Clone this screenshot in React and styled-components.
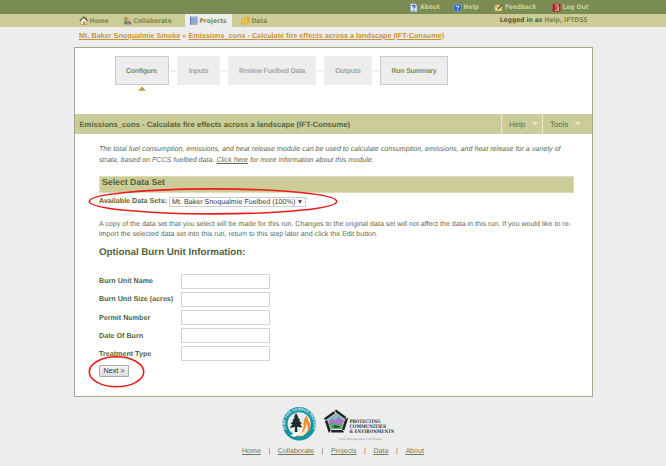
import React from 'react';
import styled, { createGlobalStyle } from 'styled-components';

const GlobalStyle = createGlobalStyle`
  * { box-sizing: border-box; }
  body {
    margin: 0;
    background: #ededed;
    color: #606d55;
    font: 7.09px/10.4px "Liberation Sans", Arial, sans-serif;
    text-rendering: geometricPrecision;
    white-space: nowrap;
  }
`;

const Page = styled.div`
  position: relative;
  width: 666px;
  height: 466px;
  overflow: hidden;
`;

const navFont = 'bold 6.52px/8px "DejaVu Sans Condensed", "DejaVu Sans", sans-serif';

const TopBar = styled.header`
  display: flex;
  height: 14px;
  padding: 0 0 0 409px;
  background: #7a8c54;
  color: #cccc99;
`;

const NavBar = styled.nav`
  display: flex;
  height: 13px;
  padding-left: 74px;
  background: #cccc99;
  color: #788a50;
`;

const NavItem = styled.a`
  display: flex;
  align-items: center;
  flex: none;
  width: ${(p) => p.$width}px;
  padding-left: ${(p) => p.$pad || 0}px;
  gap: 2px;
  background: ${(p) => (p.$active ? '#ededed' : 'transparent')};
  margin-right: ${(p) => p.$after || 0}px;
  font: ${navFont};
`;

const UserInfo = styled.div`
  margin-left: auto;
  padding: 2px 78.5px 0 0;
  font: ${navFont};
  font-size: 6.6px;
  b { color: #53643a; }
`;

const Icon = styled.svg`
  width: 9px;
  height: 9px;
  flex: none;
`;

const Breadcrumb = styled.div`
  height: 20px;
  padding: 4px 0 0 79px;
  font-size: 7.24px;
  font-weight: bold;
  color: #ca9139;
`;

const CrumbLink = styled.a`
  text-decoration: underline;
`;

const Panel = styled.main`
  width: 519.5px;
  height: 350px;
  margin-left: 73.5px;
  border: 1px solid #a5ab88;
  background: #fff;
`;

const Steps = styled.div`
  display: flex;
  height: 66px;
  padding: 8px 0 0 40px;
`;

const Step = styled.div`
  position: relative;
  width: ${(p) => p.$width}px;
  height: 29px;
  border: 1px solid ${(p) => (p.$enabled ? '#c9cbcb' : '#efefef')};
  border-bottom-width: ${(p) => (p.$enabled ? '1.5px' : '1px')};
  background: #ededed;
  color: ${(p) => (p.$enabled ? '#7f8d5b' : '#a3a8a5')};
  font-size: 7px;
  letter-spacing: -0.22px;
  font-weight: bold;
  line-height: 29px;
  text-align: center;
`;

const Connector = styled.i`
  width: ${(p) => p.$width}px;
  height: 2px;
  margin-top: 14px;
  background: #eee;
  border: solid #fff;
  border-width: 0 1.5px;
`;

const StepArrow = styled.svg`
  position: absolute;
  top: 29px;
  left: 22.5px;
  width: 8px;
  height: 5px;
  fill: #cb932b;
`;

const TitleBar = styled.div`
  display: flex;
  height: 20px;
  background: #cccc99;
`;

const Title = styled.h1`
  flex: 1;
  margin: 0;
  padding-left: 5px;
  font-size: 7.66px;
  line-height: 22px;
  color: #53643a;
`;

const MenuButton = styled.div`
  display: flex;
  align-items: center;
  width: ${(p) => p.$width}px;
  padding: 2px 0 0 7.5px;
  gap: 6.5px;
  border-left: 1px solid #e8e8d0;
  color: #5f6e43;
  font-size: 7.9px;
`;

const Caret = styled.svg`
  width: 6px;
  height: 4px;
  fill: #e8e8cd;
  margin-top: -2px;
`;

const Content = styled.div`
  width: 500px;
  padding: 10px 0 0 24.5px;
`;

const Intro = styled.p`
  height: 32px;
  margin: 0;
  font-size: 7.11px;
  line-height: 10.6px;
  font-style: italic;
`;

const SectionTitle = styled.h2`
  width: 475px;
  height: 17px;
  margin: 0 0 1.5px;
  padding-left: 2px;
  border: 1px solid #deddbb;
  background: #cccc99;
  color: #53643a;
  font-size: 8.72px;
  line-height: 11px;
`;

const SelectRow = styled.div`
  display: flex;
  align-items: center;
  height: 14px;
`;

const Label = styled.label`
  width: ${(p) => p.$width}px;
  color: #53643a;
  font-size: 7.15px;
  font-weight: bold;
`;

const Select = styled.div`
  display: flex;
  align-items: center;
  justify-content: space-between;
  width: 136.5px;
  height: 10px;
  padding: 0 3px 0 2px;
  border: 1px solid #ccc;
  color: #3c3c3c;
  font-size: 7.16px;
  line-height: 8px;
`;

const SelectCaret = styled.svg`
  width: 4px;
  height: 4px;
  fill: #222;
`;

const Note = styled.p`
  margin: 10.5px 0 0;
  height: 28px;
`;

const FormTitle = styled.h2`
  height: 25.5px;
  margin: 0;
  color: #53643a;
  font-size: 9.77px;
  line-height: 12px;
`;

const FieldRow = styled.div`
  display: flex;
  align-items: center;
  height: 18.1px;
`;

const Input = styled.input`
  width: 88.5px;
  height: 15px;
  padding: 0 2px;
  border: 1px solid #d4d4d4;
  background: #fff;
  font-size: 7px;
`;

const Button = styled.button`
  display: block;
  width: 30px;
  height: 12px;
  margin-top: 2px;
  padding: 0;
  border: 1px solid #aaa;
  border-radius: 1px;
  background: linear-gradient(#f6f6f6, #dcdcdc);
  color: #333;
  font: 7.2px/9px "Liberation Sans", Arial, sans-serif;
`;

const Footer = styled.footer`
  padding-left: 242px;
`;

const Logos = styled.svg`
  display: block;
  width: 160px;
  height: 41px;
  margin: 8px 0 1px 38px;
`;

const FooterLinks = styled.div`
  display: flex;
  font-size: 7.07px;
  color: #7a7a4a;
  a { color: #6d7a52; text-decoration: underline; }
`;

const Pipe = styled.span`
  width: 17px;
  text-align: center;
`;

const Marks = styled.svg`
  position: absolute;
  inset: 0;
  pointer-events: none;
`;

const icons = {
  help: (
    <>
      <circle cx="4.5" cy="4.8" r="3.9" fill="#2e62c4" stroke="#9ab5df" strokeWidth=".6" />
      <path d="M3 3.7Q4.7 2 5.8 3.5Q5.6 4.8 4.5 5.2M4.5 6.3v1" stroke="#fff" strokeWidth="1" fill="none" />
    </>
  ),
  about: (
    <>
      <path d="M1.5.8H6.5L8 2.5V8.6H1.5z" fill="#d9e7fa" stroke="#85a4d3" strokeWidth=".5" />
      <path d="M3 3.2Q4.9 1.6 6 3.1Q5.9 4.2 4.6 5.1M4.6 6.4v1.2" stroke="#2856ad" strokeWidth="1.3" fill="none" />
    </>
  ),
  feedback: (
    <>
      <path d="M.8 2h7v6h-7z" fill="#ecd899" stroke="#c59a3b" strokeWidth=".6" />
      <path d="M1 2.5L4.3 5.3 7.6 2.5" stroke="#8b7230" strokeWidth=".7" fill="none" />
      <path d="M4 6L8 1.6" stroke="#54462d" strokeWidth="1.2" />
    </>
  ),
  logout: (
    <>
      <rect x=".7" y=".8" width="7.8" height="7.8" fill="#b91f25" />
      <path d="M3 1.6h3.8v6.2H3z" fill="#f3dedb" />
      <path d="M3.2 1.7l2.4 1.2v4.8L3.2 6.8z" fill="#c4373a" />
      <circle cx="6.2" cy="3" r=".8" fill="#444" />
    </>
  ),
  home: (
    <>
      <path d="M1.8 4.3V8.5h6V4.3L4.8 1.5z" fill="#f6f1df" stroke="#85816c" strokeWidth=".5" />
      <path d="M.8 4.9L4.8 1 8.5 4.9" stroke="#5c5540" strokeWidth="1.2" fill="none" />
      <path d="M4.2 5.6h2v3h-2z" fill="#c57925" />
      <path d="M6.6 1.2h1v2h-1z" fill="#876342" />
    </>
  ),
  people: (
    <>
      <circle cx="2.9" cy="2.9" r="1.8" fill="#b68458" />
      <path d="M.6 8.3Q.7 4.4 3 4.4T5.7 8.3z" fill="#659667" />
      <circle cx="6.2" cy="3.3" r="1.6" fill="#d4b09a" />
      <path d="M3.8 8.6Q4.1 5 6.4 5T8.8 8.6z" fill="#858cae" />
      <path d="M5.5 5.2l1.8 2.6" stroke="#c84c4c" strokeWidth=".8" />
    </>
  ),
  book: (
    <>
      <rect x="1" y=".5" width="7.7" height="8.3" fill="#90a9d2" />
      <path d="M1.6.5v8.3" stroke="#5c7db1" strokeWidth="1" />
      <path d="M3 1.6h5M3 7.9h5" stroke="#afc1de" strokeWidth=".5" />
    </>
  ),
  data: (
    <>
      <path d="M3.8 1.5Q6.3.3 8.5 1.6V6.8Q6.3 8 3.8 6.9z" fill="#e4a824" />
      <path d="M.7 3.2Q2.5 2.4 4.4 3.2V7.9Q2.5 8.8.7 7.8z" fill="#f1c44d" stroke="#c78516" strokeWidth=".4" />
      <path d="M5.3 2.2v4.6" stroke="#fbe39a" strokeWidth="1" />
    </>
  ),
};

const topLinks = [
  ['about', 'About', 43.5],
  ['help', 'Help', 41.5],
  ['feedback', 'Feedback', 57.5],
  ['logout', 'Log Out', 40],
];

const navLinks = [
  { icon: 'home', text: 'Home', width: 44.5, pad: 4.5 },
  { icon: 'people', text: 'Collaborate', width: 56, pad: 4, after: 10 },
  { icon: 'book', text: 'Projects', width: 47, pad: 4, active: true },
  { icon: 'data', text: 'Data', width: 50, pad: 9 },
];

const steps = [
  { text: 'Configure', width: 54, enabled: true, current: true, gap: 8.5 },
  { text: 'Inputs', width: 43, gap: 8 },
  { text: 'Review Fuelbed Data', width: 88, gap: 8 },
  { text: 'Outputs', width: 48, gap: 8 },
  { text: 'Run Summary', width: 68, enabled: true },
];

const fields = ['Burn Unit Name', 'Burn Unit Size (acres)', 'Permit Number', 'Date Of Burn', 'Treatment Type'];
const footerLinks = ['Home', 'Collaborate', 'Projects', 'Data', 'About'];

function MenuCaret() {
  return <Caret viewBox="0 0 6 4"><path d="M0 0h6L3 3.6z" /></Caret>;
}

function PartnerLogos() {
  return (
    <Logos viewBox="280 405 160 41">
      <circle cx="299.2" cy="423.8" r="16.7" fill="#1593a6" />
      <circle cx="299.2" cy="423.8" r="11.6" fill="#e6eeec" />
      <path id="seal" d="M286.1 430A14.2 14.2 0 1 1 312.3 430" fill="none" />
      <text fill="#e1f3f3" fontSize="3.7" fontWeight="bold" fontFamily="Liberation Sans, sans-serif">
        <textPath href="#seal" textLength="57">JOINT FIRE SCIENCE PROGRAM</textPath>
      </text>
      <path d="M292 435Q303 432 304 426Q302 421 307 415Q307 419 310.5 424Q311 432 302 436Q297 438 292 435z" fill="#ee913a" />
      <path d="M298 435Q306 432 306.5 423Q310 430 304 435Q301 437 298 435z" fill="#fff0cc" />
      <path d="M290 435Q300 433 302 427Q305 433 294 437z" fill="#fff" />
      <path d="M296 413l2.3 4-.8.1 2.8 3-1.3.2 3 3.4-1.8.2 2.1 3.6-5.2-.7.3 5.2h-2.6l.3-5-5.4 1 2.8-4-2-.1 3.1-3.3-1.3-.1 2.5-3.1-.9-.3z" fill="#222b29" />
      <path d="M336.2 411L346.6 418.8L342.7 431.2H329.6L325.5 418.8z" fill="#e4e6e5" stroke="#222725" strokeWidth="2.6" strokeDasharray="11.7 1.2" />
      <path d="M336.2 413.2L344.5 419.5L341.4 429H330.9L327.8 419.5z" fill="#85bac5" />
      <path d="M328.4 422L332.2 418.4 335.2 420.8 338.5 417 343.9 421 342.3 425H329.7z" fill="#b273cc" />
      <path d="M329.1 424Q334 422 337 424T343 422.7L341.4 429H330.9z" fill="#56b06a" />
      <path d="M332 426.5l3-1.4 2.5.6 3 .8-1.5 1.2h-4z" fill="#394f48" />
      <g fill="#303534" fontFamily="DejaVu Serif, serif" fontWeight="bold" fontSize="4.9">
        <text x="349.5" y="423.2" textLength="31" lengthAdjust="spacingAndGlyphs">PROTECTING</text>
        <text x="349.5" y="428.2" textLength="36.5" lengthAdjust="spacingAndGlyphs">COMMUNITIES</text>
        <text x="349.5" y="433" textLength="44.5" lengthAdjust="spacingAndGlyphs">&amp; ENVIRONMENTS</text>
      </g>
      <text x="338.7" y="440" textLength="43" fill="#999" fontSize="3.6" fontFamily="Liberation Serif, serif">Park Management Committee</text>
    </Logos>
  );
}

export default function App() {
  return (
    <Page>
      <GlobalStyle />
      <TopBar>
        {topLinks.map(([icon, text, width]) => (
          <NavItem key={text} $width={width}>
            <Icon viewBox="0 0 9 9">{icons[icon]}</Icon>
            {text}
          </NavItem>
        ))}
      </TopBar>
      <NavBar>
        {navLinks.map((n) => (
          <NavItem key={n.text} $width={n.width} $pad={n.pad} $after={n.after} $active={n.active}>
            <Icon viewBox="0 0 9 9">{icons[n.icon]}</Icon>
            {n.text}
          </NavItem>
        ))}
        <UserInfo><b>Logged in as</b> Help, IFTDSS</UserInfo>
      </NavBar>
      <Breadcrumb>
        <CrumbLink>Mt. Baker Snoqualmie Smoke</CrumbLink> »{' '}
        <CrumbLink>Emissions_cons - Calculate fire effects across a landscape (IFT-Consume)</CrumbLink>
      </Breadcrumb>
      <Panel>
        <Steps>
          {steps.map((s) => (
            <React.Fragment key={s.text}>
              <Step $width={s.width} $enabled={s.enabled}>
                {s.text}
                {s.current && <StepArrow viewBox="0 0 8 5"><path d="M.3 4.8h7.4L4 .6z" /></StepArrow>}
              </Step>
              {s.gap && <Connector $width={s.gap} />}
            </React.Fragment>
          ))}
        </Steps>
        <TitleBar>
          <Title>Emissions_cons - Calculate fire effects across a landscape (IFT-Consume)</Title>
          <MenuButton $width={41}>Help<MenuCaret /></MenuButton>
          <MenuButton $width={50.5}>Tools<MenuCaret /></MenuButton>
        </TitleBar>
        <Content>
          <Intro>
            The total fuel consumption, emissions, and heat release module can be used to calculate consumption, emissions, and heat release for a variety of
            <br />
            strata, based on FCCS fuelbed data. <CrumbLink>Click here</CrumbLink> for more information about this module.
          </Intro>
          <SectionTitle>Select Data Set</SectionTitle>
          <SelectRow>
            <Label $width={70}>Available Data Sets:</Label>
            <Select>
              Mt. Baker Snoqualmie Fuelbed (100%)
              <SelectCaret viewBox="0 0 4 4"><path d="M.2.3h3.6L2 3.8z" /></SelectCaret>
            </Select>
          </SelectRow>
          <Note>
            A copy of the data set that you select will be made for this run. Changes to the original data set will not affect the data in this run. If you would like to re-
            <br />
            import the selected data set into this run, return to this step later and click the Edit button.
          </Note>
          <FormTitle>Optional Burn Unit Information:</FormTitle>
          {fields.map((f) => (
            <FieldRow key={f}>
              <Label $width={82}>{f}</Label>
              <Input />
            </FieldRow>
          ))}
          <Button>Next &gt;</Button>
        </Content>
      </Panel>
      <Footer>
        <PartnerLogos />
        <FooterLinks>
          {footerLinks.map((l, i) => (
            <React.Fragment key={l}>
              {i > 0 && <Pipe>|</Pipe>}
              <a>{l}</a>
            </React.Fragment>
          ))}
        </FooterLinks>
      </Footer>
      <Marks width="666" height="466" fill="none" stroke="#ed1c1c" strokeWidth="1.6">
        <ellipse cx="213" cy="201.4" rx="123.7" ry="12.5" />
        <ellipse cx="116.5" cy="371.8" rx="27.2" ry="15" />
      </Marks>
    </Page>
  );
}
